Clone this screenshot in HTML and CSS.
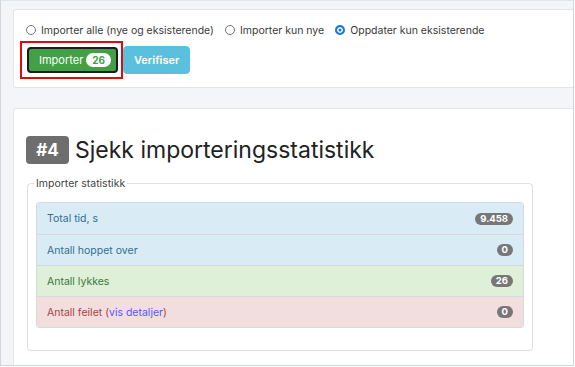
FILE: index.html
```html
<!DOCTYPE html>
<html>
<head>
<meta charset="utf-8">
<link rel="stylesheet" href="styles.css">
</head>
<body>
<div class="frame">
  <div class="card card-top">
    <div class="radios">
      <label class="radio"><span class="dot"></span>Importer alle (nye og eksisterende)</label>
      <label class="radio"><span class="dot"></span>Importer kun nye</label>
      <label class="radio"><span class="dot checked"></span>Oppdater kun eksisterende</label>
    </div>
    <div class="buttons">
      <span class="highlight"><button class="btn btn-import">Importer <span class="pill">26</span></button></span>
      <button class="btn btn-verify">Verifiser</button>
    </div>
  </div>
  <div class="card card-stats">
    <h2 class="title"><span class="step">#4</span>Sjekk importeringsstatistikk</h2>
    <fieldset class="stats">
      <legend>Importer statistikk</legend>
      <ul class="list">
        <li class="row info">Total tid, s<span class="badge">9.458</span></li>
        <li class="row info">Antall hoppet over<span class="badge">0</span></li>
        <li class="row success">Antall lykkes<span class="badge">26</span></li>
        <li class="row danger"><span>Antall feilet (<a class="link" href="#">vis detaljer</a>)</span><span class="badge">0</span></li>
      </ul>
    </fieldset>
  </div>
</div>
</body>
</html>
```

FILE: styles.css
```css
* { box-sizing: border-box; }
html, body { margin: 0; padding: 0; background: #fff; }
body { font-family: Inter, "Noto Sans", sans-serif; color: #333; }

.frame {
  width: 574px;
  height: 366px;
  border: 1px solid #cfd6de;
  border-top-color: #e1e6eb;
  background: #f3f5f8;
  padding: 8px 0 0 12px;
  overflow: hidden;
}

.card {
  background: #fff;
  border: 1px solid #e2e6ea;
  border-right: none;
  border-radius: 3px 0 0 3px;
}

.card-top {
  height: 79px;
  padding: 13px 0 0 12px;
  margin-bottom: 20px;
}

.radios {
  display: flex;
  align-items: center;
  height: 14px;
  font-size: 10.5px;
  color: #3a3a3a;
}
.radio { display: flex; align-items: center; margin-right: 11px; }
.dot {
  width: 10px; height: 10px;
  border: 1px solid #767676;
  border-radius: 50%;
  margin-right: 5px;
  background: #fff;
}
.dot.checked {
  border: 2.5px solid #1a73e8;
  box-shadow: inset 0 0 0 1.5px #fff;
  background: #1a73e8;
}

.buttons { display: flex; align-items: center; margin-top: 4px; margin-left: -6px; }
.highlight {
  display: flex;
  border: 2px solid #e00b0b;
  padding: 4px 3px 4px 5px;
}
.btn {
  font-family: Inter, "Noto Sans", sans-serif;
  font-size: 11px;
  color: #fff;
  border-radius: 4px;
  cursor: pointer;
}
.btn-import {
  height: 26px;
  width: 91px;
  padding: 0 0 0 10px;
  display: flex;
  align-items: center;
  background: #43a047;
  border: 2px solid #1c1c1c;
}
.pill {
  display: inline-block;
  background: #fff;
  color: #43a047;
  font-weight: 700;
  font-size: 10px;
  border-radius: 8px;
  padding: 1px 6px;
  margin-left: 3px;
  line-height: 12px;
}
.btn-verify {
  height: 28px;
  margin-left: 0;
  padding: 0 10px;
  background: #5bc0de;
  border: 1px solid #5bc0de;
  font-weight: 600;
}

.card-stats { height: 300px; padding: 26px 0 0 12px; }
.title {
  margin: 0;
  display: flex;
  align-items: center;
  font-weight: 400;
  font-size: 23px;
  color: #222;
  height: 30px;
}
.step {
  display: inline-flex;
  align-items: center;
  justify-content: center;
  width: 43px;
  height: 28px;
  background: #6e6e6e;
  color: #fff;
  font-weight: 700;
  font-size: 17px;
  border-radius: 4px;
  margin-right: 6px;
}

.stats {
  width: 506px;
  margin: 12px 0 0 1px;
  padding: 12px 8px 22px 8px;
  border: 1px solid #dcdfe3;
  border-radius: 4px;
}
.stats legend {
  font-size: 10.5px;
  color: #444;
  padding: 0 2px;
  margin-left: -2px;
}
.list {
  list-style: none;
  margin: 0;
  padding: 0;
  border: 1px solid #d6dadf;
  border-radius: 3px;
  overflow: hidden;
}
.row {
  display: flex;
  justify-content: space-between;
  align-items: center;
  height: 31px;
  padding: 0 10px 0 10px;
  font-size: 10.5px;
  border-top: 1px solid #d6dadf;
}
.row:first-child { border-top: none; height: 31px; }
.info { background: #d9ebf5; color: #31708f; }
.success { background: #dff0d8; color: #3c763d; }
.danger { background: #f2dede; color: #a94442; }
.link { color: #5858f5; text-decoration: none; }
.badge {
  background: #777;
  color: #fff;
  font-weight: 700;
  font-size: 9.5px;
  line-height: 12px;
  padding: 0 5px;
  border-radius: 7px;
}
```
